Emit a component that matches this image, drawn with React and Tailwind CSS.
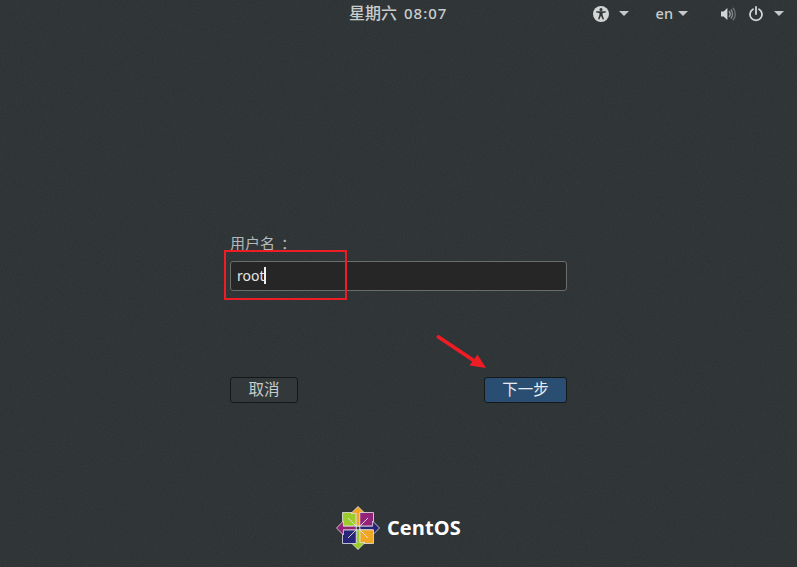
import React from 'react';

const cjk = '"Noto Sans", "Noto Sans CJK SC", sans-serif';

const Caret = () => (
  <svg width="10" height="5" viewBox="0 0 10 5" className="block">
    <path d="M0 0h10L5 5z" fill="#c6c9c9" />
  </svg>
);

const AccessIcon = () => (
  <svg width="16" height="16" viewBox="0 0 16 16" className="block">
    <circle cx="8" cy="8" r="8" fill="#d3d5d5" />
    <circle cx="8" cy="3.6" r="1.5" fill="#2e3436" />
    <path d="M3.2 5.2 L12.8 5.2 L12.8 6.5 L9.6 7.1 L9.6 9 L11 13.2 L9.7 13.6 L8 9.8 L6.3 13.6 L5 13.2 L6.4 9 L6.4 7.1 L3.2 6.5 Z" fill="#2e3436" />
  </svg>
);

const VolumeIcon = () => (
  <svg width="16" height="16" viewBox="0 0 16 16" className="block">
    <path d="M1 5.5h2.6L7.4 2v12L3.6 10.5H1z" fill="#d3d5d5" />
    <path d="M9 5.2a4 4 0 0 1 0 5.6" fill="none" stroke="#a5a8a9" strokeWidth="1.4" />
    <path d="M10.8 3.6a6.4 6.4 0 0 1 0 8.8" fill="none" stroke="#83878a" strokeWidth="1.4" />
    <path d="M12.8 1.8a9 9 0 0 1 0 12.4" fill="none" stroke="#6b6f72" strokeWidth="1.4" />
  </svg>
);

const PowerIcon = () => (
  <svg width="16" height="16" viewBox="0 0 16 16" className="block">
    <path d="M5 3.2a6 6 0 1 0 6 0" fill="none" stroke="#d3d5d5" strokeWidth="1.8" strokeLinecap="round" />
    <path d="M8 1v7" fill="none" stroke="#d3d5d5" strokeWidth="1.8" strokeLinecap="round" />
  </svg>
);

// one quarter of the logo, turned four times round the centre
const logoParts = [
  { turn: 0, square: '#9ccd2a', arrow: '#efa724' },
  { turn: 90, square: '#932279', arrow: '#262577' },
  { turn: 180, square: '#efa724', arrow: '#9ccd2a' },
  { turn: 270, square: '#262577', arrow: '#932279' },
];

const CentosLogo = () => (
  <svg width="44" height="44" viewBox="0 0 44 44" className="block">
    {logoParts.map((p) => (
      <g key={p.turn} transform={`rotate(${p.turn} 22 22)`} stroke="#e4e4e4" strokeWidth="0.8">
        <path d="M6.5 6.5h13.7v13.7H6.5z" fill={p.square} />
        <path d="M12 12L20 20" fill="none" strokeWidth="0.9" />
        <path d="M22 0.5L29 7.4h-5.2V22h-3.6V7.4H15z" fill={p.arrow} />
      </g>
    ))}
    <circle cx="22" cy="22" r="2.4" fill="#e4e4e4" />
    <circle cx="22" cy="22" r="1.5" fill="#33393b" />
  </svg>
);

export default function App() {
  return (
    <div className="relative flex h-[567px] w-[797px] flex-col overflow-hidden bg-[#2b3133] text-[#d3d7d7]" style={{ fontFamily: cjk }}>
      {/* grainy wallpaper */}
      <svg className="pointer-events-none absolute inset-0 opacity-[0.07]" width="797" height="567">
        <filter id="grain">
          <feTurbulence type="fractalNoise" baseFrequency="0.9" numOctaves="2" seed="4" />
          <feColorMatrix type="saturate" values="0" />
        </filter>
        <rect width="797" height="567" filter="url(#grain)" />
      </svg>

      {/* top bar */}
      <div className="relative flex h-[27px] shrink-0 items-center justify-end pr-[13px] text-[14.5px] font-medium text-[#c9cccc]">
        <div className="absolute left-[349px] top-[2px] flex items-baseline leading-[22px]">
          <span className="text-[16px]">星期六</span>
          <span className="ml-[7px] text-[15px] tracking-[1px]">08:07</span>
        </div>
        <div className="flex items-center gap-[10px]"><AccessIcon /><Caret /></div>
        <div className="ml-[27px] flex items-center gap-[5px] leading-none"><span>en</span><Caret /></div>
        <div className="ml-[32px]"><VolumeIcon /></div>
        <div className="ml-[12px] flex items-center gap-[10px]"><PowerIcon /><Caret /></div>
      </div>

      {/* login form */}
      <div className="relative ml-[230px] mt-[206px] flex w-[337px] flex-col">
        <label className="text-[15px] leading-[20px] text-[#b5b8b8]">
          用户名<span className="ml-[6px]">：</span>
        </label>
        <div className="mt-[8px] flex h-[30px] items-center rounded-[3px] border border-[#6a6f6b] bg-[#262626] px-[6px] pb-[2px] text-[14px] text-[#e6e6e6]">
          root<span className="ml-[-1px] h-[17px] w-[2px] bg-[#eeeeee]" />
        </div>
        <div className="mt-[86px] flex justify-between text-[15.5px]">
          <button className="h-[26px] w-[68px] rounded-[3px] border border-[#15181a] bg-[#33393b] text-[#c9cccc]">取消</button>
          <button className="h-[26px] w-[83px] rounded-[3px] border border-[#15181a] bg-[#2a4e72] text-[#e8ecee]">下一步</button>
        </div>
      </div>

      {/* logo */}
      <div className="relative ml-[336px] mt-[103px] flex items-center gap-[7px]">
        <CentosLogo />
        <span className="text-[20px] font-bold leading-none tracking-[0.1px] text-white" style={{ fontFamily: '"Open Sans", sans-serif' }}>CentOS</span>
      </div>

      {/* annotations on top of the screenshot */}
      <div className="absolute left-[224px] top-[250px] h-[50px] w-[123px] border-2 border-[#ee1c25]" />
      <svg className="absolute left-[436px] top-[334px]" width="52" height="38" viewBox="0 0 52 38">
        <path d="M2.5 3 L37 26" stroke="#ee1c25" strokeWidth="3.8" strokeLinecap="round" />
        <path d="M50 34 L33.5 31.5 L41.5 20.5 Z" fill="#ee1c25" />
      </svg>
    </div>
  );
}
